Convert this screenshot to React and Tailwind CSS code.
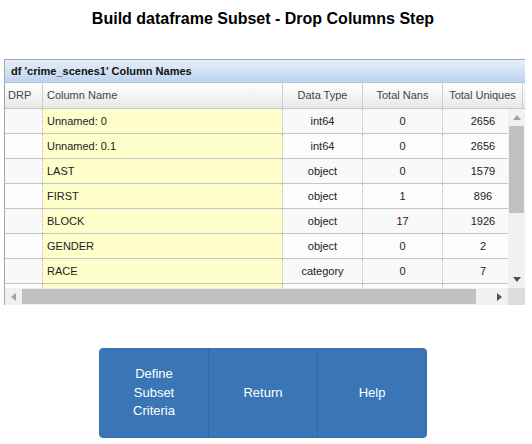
import React from "react";

const rows = [
  ["Unnamed: 0", "int64", "0", "2656"],
  ["Unnamed: 0.1", "int64", "0", "2656"],
  ["LAST", "object", "0", "1579"],
  ["FIRST", "object", "1", "896"],
  ["BLOCK", "object", "17", "1926"],
  ["GENDER", "object", "0", "2"],
  ["RACE", "category", "0", "7"],
  ["", "", "", ""],
];

function Row({ r, i }) {
  const bg = i % 2 === 0 ? "bg-[#f9f9f9]" : "bg-[#fdfdfd]";
  return (
    <div className="flex h-[25px] border-b border-[#c4c4c4] text-[11px] text-[#222]">
      <div className={`w-[38px] shrink-0 ${bg} border-r border-dotted border-[#b8b8b8]`} />
      <div className="w-[240px] shrink-0 bg-[#ffffcc] border-r border-dotted border-[#b8b8b8] flex items-center pl-[4px]">
        {r[0]}
      </div>
      <div className={`w-[80px] shrink-0 ${bg} border-r border-dotted border-[#b8b8b8] flex items-center justify-center`}>
        {r[1]}
      </div>
      <div className={`w-[80px] shrink-0 ${bg} border-r border-dotted border-[#b8b8b8] flex items-center justify-center`}>
        {r[2]}
      </div>
      <div className={`w-[80px] shrink-0 ${bg} flex items-center justify-center`}>{r[3]}</div>
      <div className={`w-[40px] shrink-0 ${bg}`} />
    </div>
  );
}

export default function App() {
  return (
    <div
      className="w-[532px] h-[444px] bg-white"
      style={{ fontFamily: '"Liberation Sans", Arial, sans-serif' }}
    >
      <div className="w-[526px] h-[38px] flex items-center justify-center text-[16px] font-bold text-black">
        Build dataframe Subset - Drop Columns Step
      </div>

      <div className="ml-[4px] mt-[21px] w-[521px] border-l border-t border-[#a8a8a8] bg-white">
        <div className="h-[23px] flex items-center pl-[6px] text-[11px] font-bold text-[#111] bg-gradient-to-b from-[#e6effa] via-[#d2e1f4] to-[#bed3ef] border-b border-[#b7c7dc]">
          df 'crime_scenes1' Column Names
        </div>
        <div className="h-[26px] flex text-[11px] text-[#444] bg-gradient-to-b from-[#ffffff] to-[#e8e8e8] border-b border-[#c8c8c8] shadow-[0_1px_2px_rgba(0,0,0,0.12)]">
          <div className="w-[38px] shrink-0 flex items-center pl-[3px] border-r border-[#cfcfcf]">DRP</div>
          <div className="w-[240px] shrink-0 flex items-center pl-[4px] border-r border-[#cfcfcf]">Column Name</div>
          <div className="w-[80px] shrink-0 flex items-center justify-center border-r border-[#cfcfcf]">Data Type</div>
          <div className="w-[80px] shrink-0 flex items-center justify-center border-r border-[#cfcfcf]">Total Nans</div>
          <div className="w-[80px] shrink-0 flex items-center justify-center border-r border-[#cfcfcf]">Total Uniques</div>
        </div>

        <div className="flex h-[179px]">
          <div className="w-[503px] overflow-hidden">
            <div className="w-[560px]">
              {rows.map((r, i) => (
                <Row key={i} r={r} i={i} />
              ))}
            </div>
          </div>
          <div className="w-[17px] bg-[#f1f1f1] flex flex-col">
            <div className="h-[17px] flex items-center justify-center">
              <svg width="8" height="5" viewBox="0 0 8 5">
                <polygon points="0,5 8,5 4,0" fill="#a3a3a3" />
              </svg>
            </div>
            <div className="h-[87px] mx-[1px] bg-[#c1c1c1]" />
            <div className="flex-1" />
            <div className="h-[17px] flex items-center justify-center">
              <svg width="8" height="5" viewBox="0 0 8 5">
                <polygon points="0,0 8,0 4,5" fill="#505050" />
              </svg>
            </div>
          </div>
        </div>

        <div className="flex h-[17px]">
          <div className="w-[503px] bg-[#f1f1f1] flex">
            <div className="w-[17px] flex items-center justify-center">
              <svg width="5" height="8" viewBox="0 0 5 8">
                <polygon points="5,0 5,8 0,4" fill="#a3a3a3" />
              </svg>
            </div>
            <div className="w-[454px] my-[1px] bg-[#c1c1c1]" />
            <div className="flex-1" />
            <div className="w-[17px] flex items-center justify-center">
              <svg width="5" height="8" viewBox="0 0 5 8">
                <polygon points="0,0 0,8 5,4" fill="#505050" />
              </svg>
            </div>
          </div>
          <div className="w-[17px] bg-[#dcdcdc]" />
        </div>
      </div>

      <div className="ml-[99px] mt-[43px] w-[328px] h-[90px] flex rounded-[4px] bg-[#3a76b5] border border-[#3370ae] text-white text-[13px] leading-[18.5px] overflow-hidden">
        <div className="flex-1 flex items-center justify-center text-center">
          Define
          <br />
          Subset
          <br />
          Criteria
        </div>
        <div className="flex-1 flex items-center justify-center border-l border-[#2e67a2]">Return</div>
        <div className="flex-1 flex items-center justify-center border-l border-[#2e67a2]">Help</div>
      </div>
    </div>
  );
}
